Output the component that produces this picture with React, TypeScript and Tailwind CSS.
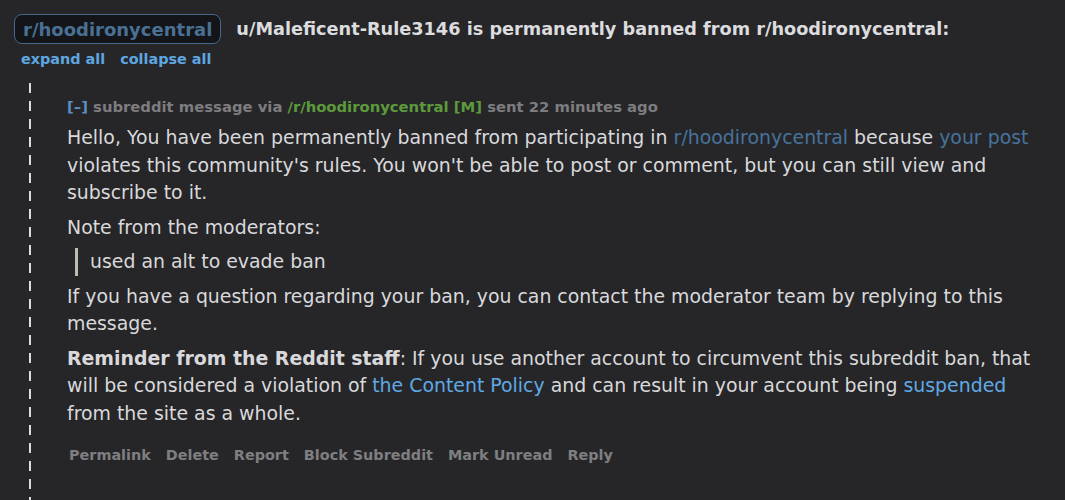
import React from "react";

export default function App() {
  return (
    <div className="w-[1065px] h-[500px] bg-[#262629] overflow-hidden font-['DejaVu_Sans',sans-serif]">
      <div className="pt-[14px] pl-[14px] flex items-center gap-[15px]">
        <div className="h-[30px] px-[8px] flex items-center rounded-[8px] border border-[#46688a] bg-[#141519] text-[18px] font-bold text-[#4a7093]">
          r/hoodironycentral
        </div>
        <div className="text-[17.7px] font-bold text-[#dcdcde]">
          u/Maleficent-Rule3146 is permanently banned from r/hoodironycentral:
        </div>
      </div>
      <div className="pl-[21px] mt-[5px] flex gap-[15px] text-[14.4px] font-bold text-[#5ea6e0] leading-[20px]">
        <span>expand all</span>
        <span>collapse all</span>
      </div>
      <div className="flex mt-[10px]">
        <div className="ml-[29px] mt-[4px] w-[2px] h-[440px] bg-[repeating-linear-gradient(to_bottom,#dcdcdc_0px,#dcdcdc_10px,transparent_10px,transparent_18px)]" />
        <div className="ml-[36px] pt-[18px] w-[980px]">
          <div className="text-[14.8px] font-bold leading-[20px] text-[#7d7d80]">
            <span className="text-[#5a8fc2]">[–]</span> subreddit message via{" "}
            <span className="text-[#5c9a3c]">/r/hoodironycentral</span>{" "}
            <span className="text-[#5c9a3c]">[M]</span> sent 22 minutes ago
          </div>
          <div className="mt-[7px] text-[18.9px] leading-[27.5px] text-[#d9d9db] flex flex-col gap-[7px]">
            <p>
              Hello, You have been permanently banned from participating in{" "}
              <span className="text-[#47739c]">r/hoodironycentral</span> because{" "}
              <span className="text-[#47739c]">your post</span> violates this community's rules. You won't be able to
              post or comment, but you can still view and subscribe to it.
            </p>
            <p>Note from the moderators:</p>
            <div className="ml-[8px] border-l-[3px] border-[#bdbcae] pl-[12px]">used an alt to evade ban</div>
            <p>
              If you have a question regarding your ban, you can contact the moderator team by replying to this
              message.
            </p>
            <p>
              <b>Reminder from the Reddit staff</b>: If you use another account to circumvent this subreddit ban, that
              will be considered a violation of <span className="text-[#5fa9e6]">the Content Policy</span> and can
              result in your account being <span className="text-[#5fa9e6]">suspended</span> from the site as a whole.
            </p>
          </div>
          <div className="mt-[18px] ml-[2px] flex gap-[15px] text-[14.4px] font-bold leading-[20px] text-[#7f7f82]">
            <span>Permalink</span>
            <span>Delete</span>
            <span>Report</span>
            <span>Block Subreddit</span>
            <span>Mark Unread</span>
            <span>Reply</span>
          </div>
        </div>
      </div>
    </div>
  );
}
